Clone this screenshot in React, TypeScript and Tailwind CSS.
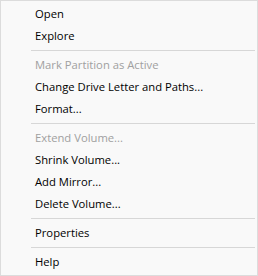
import React from 'react';

type Entry = { label: string; disabled?: boolean } | 'sep';

const entries: Entry[] = [
  { label: 'Open' },
  { label: 'Explore' },
  'sep',
  { label: 'Mark Partition as Active', disabled: true },
  { label: 'Change Drive Letter and Paths...' },
  { label: 'Format...' },
  'sep',
  { label: 'Extend Volume...', disabled: true },
  { label: 'Shrink Volume...' },
  { label: 'Add Mirror...' },
  { label: 'Delete Volume...' },
  'sep',
  { label: 'Properties' },
  'sep',
  { label: 'Help' },
];

export default function App() {
  return (
    <div
      className="w-[258px] h-[276px] bg-[#f9f9f9] border border-[#dcdcdc] py-[2px] text-[11.25px]"
      style={{ fontFamily: '"Open Sans", "Noto Sans", sans-serif' }}
    >
      {entries.map((e, i) =>
        e === 'sep' ? (
          <div key={i} className="h-[7px] flex items-center pl-[30px] pr-[2px]">
            <div className="h-px w-full bg-[#d7d7d7]" />
          </div>
        ) : (
          <div
            key={i}
            className={`h-[22px] flex items-center pl-[34px] ${e.disabled ? 'text-[#a0a0a0]' : 'text-black'}`}
          >
            {e.label}
          </div>
        )
      )}
    </div>
  );
}
